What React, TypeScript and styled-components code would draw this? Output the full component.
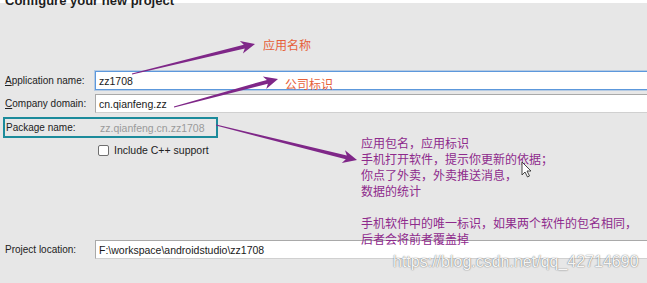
import styled, { createGlobalStyle } from 'styled-components';

const GlobalStyle = createGlobalStyle`
  html, body {
    margin: 0;
    padding: 0;
    background: #e7e7e7;
    overflow: hidden;
  }
`;

type Pt = [number, number];

// tapered shaft + swept head, like a hand-placed slide arrow
const arrowPoints = (from: Pt, to: Pt) => {
  const [x0, y0] = from;
  const [x1, y1] = to;
  const len = Math.hypot(x1 - x0, y1 - y0);
  const ux = (x1 - x0) / len;
  const uy = (y1 - y0) / len;
  const nx = -uy;
  const ny = ux;
  const headLen = 14;
  const headHalf = 6.5;
  const back = 3;
  const bx = x1 - ux * headLen;
  const by = y1 - uy * headLen;
  const nbx = bx + ux * back;
  const nby = by + uy * back;
  const p = (x: number, y: number) => `${x.toFixed(1)},${y.toFixed(1)}`;
  return [
    p(x0 + nx * 0.5, y0 + ny * 0.5),
    p(nbx + nx * 2, nby + ny * 2),
    p(bx + nx * headHalf, by + ny * headHalf),
    p(x1, y1),
    p(bx - nx * headHalf, by - ny * headHalf),
    p(nbx - nx * 2, nby - ny * 2),
    p(x0 - nx * 0.5, y0 - ny * 0.5),
  ].join(' ');
};

const arrows: [Pt, Pt][] = [
  [[132, 74], [255, 44]],
  [[174, 107], [278, 79]],
  [[216, 125], [357, 160]],
];

const notes = [
  '应用包名，应用标识',
  '手机打开软件，提示你更新的依据；',
  '你点了外卖，外卖推送消息，',
  '数据的统计',
  '',
  '手机软件中的唯一标识，如果两个软件的包名相同，',
  '后者会将前者覆盖掉',
];

const Page = styled.div`
  position: relative;
  width: 100vw;
  min-width: 647px;
  height: 283px;
  overflow: hidden;
  background: #e7e7e7;
  font-family: 'Liberation Sans', Arial, sans-serif;
  color: #222;
`;

const Header = styled.div`
  display: flow-root;
  height: 3px;
  background: #fff;
  padding-left: 5px;
`;

const Title = styled.div`
  margin-top: -6px;
  font-size: 13px;
  line-height: 13px;
  font-weight: bold;
  color: #1e1e1e;
  white-space: nowrap;
`;

const Form = styled.div`
  display: flex;
  flex-direction: column;
  padding: 68px 0 0 5px;
`;

const Row = styled.div<{ $gap?: number }>`
  display: grid;
  grid-template-columns: 90px 700px;
  align-items: center;
  height: 19px;
  margin-top: ${(p) => p.$gap ?? 0}px;
`;

const Label = styled.label`
  font-size: 10px;
  color: #222;
  white-space: nowrap;
`;

const Key = styled.span`
  text-decoration: underline;
`;

const Input = styled.div<{ $focus?: boolean }>`
  box-sizing: border-box;
  height: 19px;
  padding-left: 3px;
  display: flex;
  align-items: center;
  background: #fff;
  font-size: 10.5px;
  color: #1a1a1a;
  border: 1px solid ${(p) => (p.$focus ? '#5c98dc' : '#a9a9a9')};
  border-bottom-color: ${(p) => (p.$focus ? '#5c98dc' : '#d0d0d0')};
  border-right: none;
  box-shadow: ${(p) => (p.$focus ? '0 0 0 1px rgba(92,152,220,0.35)' : 'none')};
  white-space: nowrap;
`;

const PackageBox = styled.div`
  box-sizing: border-box;
  display: grid;
  grid-template-columns: 94px 1fr;
  align-items: center;
  width: 215px;
  height: 21px;
  margin: 4px 0 0 -2px;
  padding-left: 1px;
  border: 2px solid #1c8b9b;
`;

const Muted = styled.span`
  font-size: 10.5px;
  color: #9a9a9a;
  white-space: nowrap;
`;

const CheckRow = styled.div`
  display: flex;
  align-items: center;
  gap: 5px;
  height: 12px;
  margin: 6px 0 0 93px;
`;

const Box = styled.span`
  box-sizing: border-box;
  width: 11px;
  height: 11px;
  background: #fff;
  border: 1px solid #6f6f6f;
  border-radius: 2px;
`;

const CheckText = styled.span`
  font-size: 10.5px;
  color: #222;
`;

const Overlay = styled.svg`
  position: absolute;
  left: 0;
  top: 0;
  pointer-events: none;
`;

const Note = styled.div<{ $x: number; $y: number }>`
  position: absolute;
  left: ${(p) => p.$x}px;
  top: ${(p) => p.$y}px;
  font-family: 'Noto Sans CJK SC', sans-serif;
  font-size: 12px;
  line-height: 16px;
  color: #e6603a;
  white-space: nowrap;
`;

const NoteBlock = styled(Note)`
  color: #8e2a8c;
`;

const NoteLine = styled.div`
  height: 16px;
`;

const Watermark = styled.div`
  position: absolute;
  left: 393px;
  top: 253px;
  font-family: 'Liberation Sans', Arial, sans-serif;
  font-size: 16px;
  line-height: 18px;
  color: rgba(255, 255, 255, 0.95);
  text-shadow: 0 0 1px rgba(0, 0, 0, 0.55), 0 0 2px rgba(0, 0, 0, 0.2);
  white-space: nowrap;
`;

export default function App() {
  return (
    <Page>
      <GlobalStyle />
      <Header>
        <Title>Configure your new project</Title>
      </Header>
      <Form>
        <Row>
          <Label>
            <Key>A</Key>pplication name:
          </Label>
          <Input $focus>zz1708</Input>
        </Row>
        <Row $gap={4}>
          <Label>
            <Key>C</Key>ompany domain:
          </Label>
          <Input>cn.qianfeng.zz</Input>
        </Row>
        <PackageBox>
          <Label>Package name:</Label>
          <Muted>zz.qianfeng.cn.zz1708</Muted>
        </PackageBox>
        <CheckRow>
          <Box />
          <CheckText>Include C++ support</CheckText>
        </CheckRow>
        <Row $gap={84}>
          <Label>Project location:</Label>
          <Input>F:\workspace\androidstudio\zz1708</Input>
        </Row>
      </Form>

      <Note $x={263} $y={37}>应用名称</Note>
      <Note $x={285} $y={76}>公司标识</Note>
      <NoteBlock $x={361} $y={135}>
        {notes.map((t, i) => (
          <NoteLine key={i}>{t}</NoteLine>
        ))}
      </NoteBlock>

      <Overlay width={700} height={283}>
        {arrows.map(([a, b], i) => (
          <polygon key={i} points={arrowPoints(a, b)} fill="#7f2788" />
        ))}
        <path
          d="M522 162 L522 175 L525 172 L527.5 177 L529.5 176 L527 171 L531 171 Z"
          fill="#fff"
          stroke="#333"
          strokeWidth={0.9}
          strokeLinejoin="round"
        />
      </Overlay>
      <Watermark>https://blog.csdn.net/qq_42714690</Watermark>
    </Page>
  );
}
